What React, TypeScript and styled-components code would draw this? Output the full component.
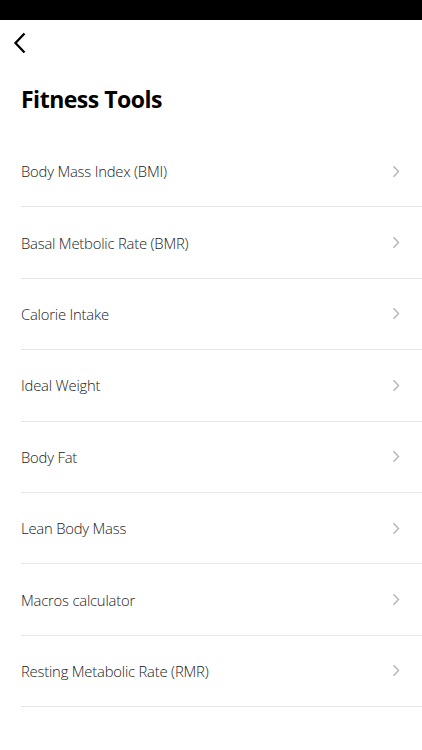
import React from 'react';
import styled, { createGlobalStyle } from 'styled-components';

const GlobalStyle = createGlobalStyle`
  html, body {
    margin: 0;
    padding: 0;
    background: #ffffff;
  }
  body {
    font-family: "Open Sans", "Noto Sans", sans-serif;
    color: #111111;
  }
`;

const Screen = styled.div`
  width: 422px;
  height: 750px;
  overflow: hidden;
  background: #fff;
  display: flex;
  flex-direction: column;
`;

const StatusBar = styled.div`
  height: 20px;
  background: #000;
  flex-shrink: 0;
`;

const NavBar = styled.div`
  height: 45px;
  display: flex;
  align-items: center;
  padding-left: 13px;
`;

const BackButton = styled.button`
  border: 0;
  background: none;
  padding: 0;
  width: 16px;
  height: 24px;
  display: flex;
  align-items: center;
  cursor: pointer;
`;

const Title = styled.h1`
  margin: 0;
  padding: 18px 0 0 21px;
  height: 53px;
  font-size: 23px;
  font-weight: 700;
  letter-spacing: -0.5px;
  color: #000;
`;

const List = styled.ul`
  list-style: none;
  margin: 0;
  padding: 0 0 0 21px;
`;

const Row = styled.li`
  height: 71.4px;
  box-sizing: border-box;
  display: flex;
  align-items: center;
  justify-content: space-between;
  padding-right: 22px;
  border-bottom: 1px solid #e6e6e6;
`;

const Label = styled.span`
  font-size: 14.8px;
  font-weight: 300;
  color: #1a1a1a;
  letter-spacing: -0.2px;
`;

const Chevron = () => (
  <svg width="8" height="13" viewBox="0 0 8 13" fill="none">
    <path d="M1.5 1.2 L6.5 6.5 L1.5 11.8" stroke="#b4b4b4" strokeWidth="1.4" />
  </svg>
);

const tools = [
  'Body Mass Index (BMI)',
  'Basal Metbolic Rate (BMR)',
  'Calorie Intake',
  'Ideal Weight',
  'Body Fat',
  'Lean Body Mass',
  'Macros calculator',
  'Resting Metabolic Rate (RMR)',
];

export default function App() {
  return (
    <>
      <GlobalStyle />
      <Screen>
        <StatusBar />
        <NavBar>
          <BackButton aria-label="Back">
            <svg width="14" height="22" viewBox="0 0 14 22" fill="none">
              <path d="M11.5 1.5 L2.5 11 L11.5 20.5" stroke="#000" strokeWidth="2.3" />
            </svg>
          </BackButton>
        </NavBar>
        <Title>Fitness Tools</Title>
        <List>
          {tools.map((t) => (
            <Row key={t}>
              <Label>{t}</Label>
              <Chevron />
            </Row>
          ))}
        </List>
      </Screen>
    </>
  );
}
